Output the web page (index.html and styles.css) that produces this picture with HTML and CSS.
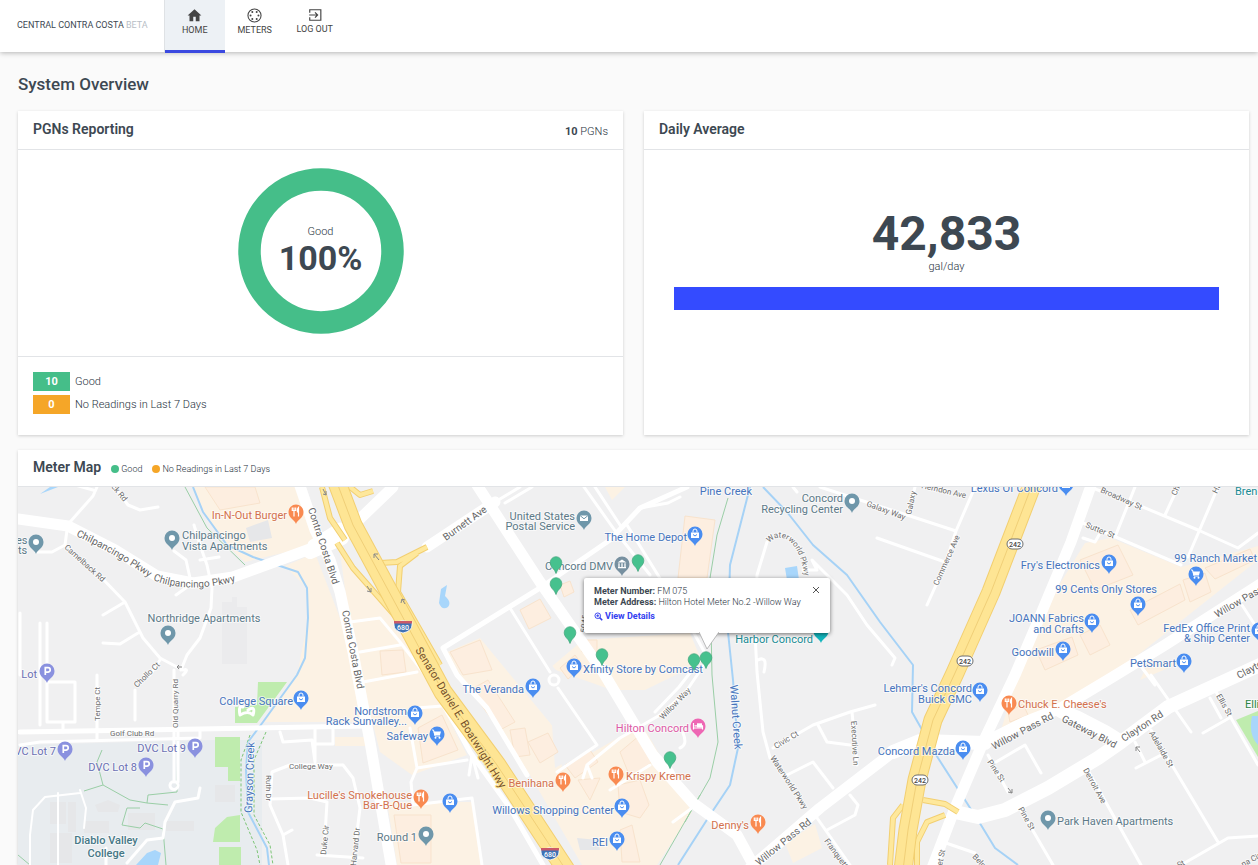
FILE: index.html
```html
<!DOCTYPE html>
<html lang="en">
<head>
<meta charset="utf-8">
<title>System Overview</title>
<link rel="stylesheet" href="styles.css">
</head>
<body>
<header class="topbar">
  <div class="brand">CENTRAL CONTRA COSTA <span class="beta">BETA</span></div>
  <nav class="nav">
    <a class="nav-item active" href="#home">
      <svg viewBox="0 0 24 24" class="nav-icon"><path fill="currentColor" d="M10 21v-7h4v7h6v-9h3L12 2 1 12h3v9z"/></svg>
      <span>HOME</span></a>
    <a class="nav-item" href="#meters">
      <svg viewBox="0 0 24 24" class="nav-icon"><circle cx="12" cy="12" r="10.500" fill="none" stroke="currentColor" stroke-width="1.700"/><g fill="currentColor"><circle cx="8.500" cy="6.500" r="1.600"/><circle cx="15.500" cy="6.500" r="1.600"/><circle cx="5.700" cy="12" r="1.600"/><circle cx="18.300" cy="12" r="1.600"/><circle cx="8.500" cy="17.500" r="1.600"/><circle cx="15.500" cy="17.500" r="1.600"/></g></svg>
      <span>METERS</span></a>
    <a class="nav-item logout" href="#logout">
      <svg viewBox="0 0 24 24" class="nav-icon"><path fill="none" stroke="currentColor" stroke-width="2" d="M3 8V3h19v18H3v-5M2 12h14M12 7.500l4.500 4.500-4.500 4.500"/></svg>
      <span>LOG OUT</span></a>
  </nav>
</header>
<main class="page">
  <h1>System Overview</h1>
  <div class="row">
    <section class="card">
      <div class="card-head"><h2>PGNs Reporting</h2><span class="count"><b>10</b> PGNs</span></div>
      <div class="donut-wrap">
        <div class="donut">
          <svg viewBox="0 0 166 166" class="ring"><circle cx="83" cy="83" r="71.500" fill="none" stroke="#45be89" stroke-width="22.500"/></svg>
          <div class="donut-label"><span>Good</span><strong>100%</strong></div>
        </div>
      </div>
      <ul class="legend">
        <li><span class="badge good">10</span>Good</li>
        <li><span class="badge warn">0</span>No Readings in Last 7 Days</li>
      </ul>
    </section>
    <section class="card">
      <div class="card-head"><h2>Daily Average</h2></div>
      <div class="average"><strong>42,833</strong><span>gal/day</span><div class="bar"></div></div>
    </section>
  </div>
  <section class="card map-card">
    <div class="card-head map-head"><h2>Meter Map</h2><span class="key"><i class="dot good"></i>Good</span><span class="key"><i class="dot warn"></i>No Readings in Last 7 Days</span></div>
    <div class="map">
      <svg class="map-svg" viewBox="18 487 1240 378" preserveAspectRatio="xMinYMin slice">
        <defs>
          <path id="drop" d="M0 12C-1.200 7.500-7.500 6.500-7.500 0A7.500 7.500 0 1 1 7.500 0C7.500 6.500 1.200 7.500 0 12Z"/>
          <g id="p-dot"><use href="#drop" fill="#6f97aa"/><circle r="3" fill="#fff"/></g>
          <g id="p-bag"><use href="#drop" fill="#4a8df0"/><path d="M-4-1.500H4V4H-4Z" fill="#fff"/><path d="M-2-1.500V-3a2 2 0 0 1 4 0v1.500" fill="none" stroke="#fff"/><path d="M-2 0.500Q0 3.500 2 0.500" fill="none" stroke="#4a8df0"/></g>
          <g id="p-cart"><use href="#drop" fill="#4a8df0"/><path d="M-3.500-2.500H4L3 1H-2.500Z" fill="#fff"/><path d="M-5-4h1.500L-2 2H3" fill="none" stroke="#fff"/><circle cx="-1.500" cy="3.700" r="1" fill="#fff"/><circle cx="2.500" cy="3.700" r="1" fill="#fff"/></g>
          <g id="p-food"><use href="#drop" fill="#f98a51"/><path d="M-2-4.500V4.500M-3.700-4.500v3h3.400v-3M2.500 4.500v-9Q1 -3 1.500 0h1" fill="none" stroke="#fff" stroke-width="1.200"/></g>
          <g id="p-park"><use href="#drop" fill="#8a91df"/><path d="M-1.700 4V-3.300H1a2.200 2.200 0 0 1 0 4.400H-1.700" fill="none" stroke="#fff" stroke-width="1.700"/></g>
          <g id="p-mail"><use href="#drop" fill="#6f97aa"/><path d="M-4-2.500H4V3H-4Z" fill="#fff"/><path d="M-4-2.500 0 .8 4-2.500" fill="none" stroke="#6f97aa"/></g>
          <g id="p-civic"><use href="#drop" fill="#7790a0"/><path d="M-4.500-1.500 0-4.500 4.500-1.500ZM-4 3H4V4.200H-4Z" fill="#fff"/><path d="M-3-.8V3M0-.8V3M3-.8V3" stroke="#fff" stroke-width="1.300"/></g>
          <g id="p-bed"><use href="#drop" fill="#ee67b4"/><path d="M-4.500-3V3.500M-4.500 2H4.500V3.500M4.500 2V-.2H-3.500" fill="none" stroke="#fff" stroke-width="1.200"/><path d="M-1-2.700H4V1.500H-1Z" fill="#fff"/></g>
          <g id="meter"><path d="M0 8.500C-1 6-1.500 5-3 3.500-5 1.500-5.800-.5-5.800-2.500A5.800 5.800 0 0 1 5.800-2.500C5.800-.5 5 1.500 3 3.500 1.500 5 1 6 0 8.500Z" fill="#46c18e" stroke="#3fa47a" stroke-width=".7"/></g>
          <g id="i680"><path d="M-9-4.500Q-5-3.500 0-5.500 5-3.500 9-4.500L9-1Q9 5 0 7-9 5-9-1Z" fill="#3f72b5" stroke="#fff" stroke-width=".8"/><path d="M-9-5H9V-2.500H-9Z" fill="#cc5a68"/><text y="4" class="shield white">680</text></g>
          <g id="s242"><rect x="-8" y="-5" width="16" height="10" rx="5" fill="#fff" stroke="#6e6e6e"/><text y="3" class="shield">242</text></g>
          <path id="c-chil" d="M76 536Q112 552 153 580"/>
          <path id="c-chil2" d="M153 580Q190 595 240 580"/>
          <path id="c-water" d="M769 543Q778 533 789 541 803 552 805 585"/>
          <path id="c-sen" d="M415 650 503 793"/>
          <path id="ramps" d="M322 487 330 518 345 540M337 543 353 568 397 618M362 540 367 552 380 563 397 562 427 547M417 553 400 566 398 592 413 618 440 665M350 487 360 495 373 491M903 805 893 818 890 865M923 800 945 804 958 812M917 865 917 842 927 822 945 815"/>
          <path id="freeways" d="M336 480 353 525 380 575 407 625 443 692 497 765 543 835 566 870M1034 480 991 592 955 673 933 720 917 780 908 830 903 870"/>
        </defs>

        <rect x="18" y="487" width="1240" height="378" fill="#f0f0f1"/>
        <g fill="#e8ecef"><path d="M18 745 215 740H262V865H18Z"/></g>
        <g fill="#fcf2e4">
          <path d="M193 487H298L316 545 245 562 227 545 207 518Z"/>
          <path d="M285 566 315 553 360 670 368 722H264L297 675 308 620 307 588Z"/>
          <path d="M340 552 390 613 425 672 467 755 412 775 380 752 352 640Z"/>
          <path d="M387 802H472L482 865H397ZM335 737H367V746H335Z"/>
          <path d="M445 653 480 638 560 735 562 770 642 724 692 812 657 865H582L530 775Z"/>
          <path d="M550 668 583 640 690 633 702 662 645 690 612 690ZM605 487H625L612 500ZM785 843 815 824 822 848 793 863Z"/>
          <path d="M1085 543 1111 538 1181 567 1251 548 1258 546V560L1138 655 1060 708 1001 730 1018 675 1045 608Z"/>
          <path d="M1140 680 1180 663 1150 660Z"/>
        </g>
        <g fill="#f0f0f1"><path d="M497 652 530 640 612 735 555 768 552 725Z"/></g>
        <g class="buildings">
          <path d="M685 516 715 520 707 578 678 578ZM520 610 540 599 551 618 529 629ZM450 652 480 640 492 670 463 675ZM380 651 403 650 406 672 382 675Z"/>
          <path d="M560 585 570 581 574 592 564 597ZM580 640h17v12h-15ZM560 668 575 655 583 666 568 679ZM528 742 548 733 558 752 540 763ZM565 765 590 750 598 762 575 778Z"/>
          <path d="M418 728 442 715 458 750 423 763ZM394 815h37v48h-30ZM620 752 640 735 655 760 630 777ZM618 785 640 780 649 805 640 818 620 812ZM470 690 488 680 515 722 500 730ZM510 730 525 728 530 755 515 757Z"/>
          <path d="M620 830 632 825 640 862 622 862ZM578 780 600 778 590 800ZM1080 560 1118 545 1133 575 1095 590ZM1130 610 1180 584 1185 600 1138 625ZM1183 580 1205 573 1211 592 1190 602ZM1080 635 1100 625 1110 645 1090 655ZM1036 650 1072 637 1078 655 1045 670ZM1205 568 1250 549 1255 560 1215 579ZM1008 712 1023 704 1028 715 1010 722ZM205 487 255 487 260 503 220 510Z"/>
        </g>
        <g fill="#e6e7e9">
          <path d="M246 528 268 520 272 538 250 542ZM50 802h16v22h-16ZM68 802h8v30h-8ZM95 805 108 800 120 805 118 812 98 812ZM128 813h27v17h-27ZM84 821h25v12h-25ZM215 785h20v17h-20ZM50 833h22v30h-22ZM166 821h28v10h-28ZM577 838 598 840 600 850 580 850Z"/>
        </g>
        <path d="M222 602h10v-5h5v10h10v57h-25Z" fill="#ebebed"/>
        <g fill="#bfecae"><path d="M258 682H287L257 723H235V707L257 705ZM215 737H240V781H228V767H215ZM240 815V842H213L215 828 227 817ZM219 847H241V865H219ZM1236 720 1258 711V757Z"/></g>
        <g fill="#a8d6fb"><path d="M136 865 147 853 155 850 161 853 158 865ZM785 568 797 566 799 580 787 580ZM441 589 447 585 445 596Q452 602 448 607 442 611 439 603ZM1252 716H1258V745Q1248 735 1252 716ZM40 494 50 487H58Z"/></g>

        <g class="creek">
          <path d="M193 487 203 512 227 545 253 557 277 565 298 572 307 588 308 618 305 658 297 675 263 722 248 742 246 770 248 812 267 848 269 865"/>
          <path d="M750 487 730 565 728 632 733 680 738 748 730 785 710 815 678 865"/>
          <path d="M763 487 787 512 813 545 847 575 880 622 913 665 912 712 938 758 965 800 981 825 995 848 1018 865"/>
        </g>
        <g class="trail">
          <path d="M185 487 207 528 245 565M728 498 717 535 710 578 712 675 718 742 710 778 687 818 660 865M700 795 685 822"/>
          <path d="M102 750 97 762 103 785 130 800 147 803 148 795 177 792 178 735M84 791 103 785M147 803 168 805M140 808 127 808 122 825 140 828 145 823 163 829 166 865M18 855 30 865"/>
          <path class="dash" d="M250 735 241 760 241 812 257 850 260 865M266 732 254 760 254 815 270 845 273 865"/>
        </g>

        <g class="minor">
          <path d="M70 522 93 496 97 487M75 485 93 490M67 530 65 545 52 552 36 552M115 487 128 505 140 510 158 507M100 576 125 602 143 638 160 658 177 667M125 602 103 615M138 633 120 644 103 643M194 525 200 545 207 565 212 588 211 608 200 638 187 655 181 670M174 551 186 560 190 578M200 560 219 557M190 585 176 595"/>
          <path d="M20 613V675M40 623V725M47 623V682M47 682H75V722H47ZM97 675V740M135 690V720M63 722V732M20 745 40 742 200 738V730M150 675 160 660M174 670V782M183 675Q190 668 183 670M172 782a4 4 0 1 0 4 0M178 728V782"/>
          <path d="M280 732 283 742 312 740 315 762M315 728V762M333 728V744H316M343 765H290L272 772 270 805 283 835 288 865M343 765 353 778 360 808 353 865M270 799 310 798 327 802 325 835 323 855M317 855 363 858M283 835 292 830M243 707Q238 705 240 715 248 710 253 715 256 705 248 710"/>
          <path class="thin" d="M30 865V835L33 810 45 797 80 793M80 790 86 808 84 828M58 793V865"/>
          <path d="M200 788 198 798 175 802 165 822 163 838 147 840 127 863M106 848V865"/>
          <path d="M350 622 380 618 400 642 423 672M360 652 400 645M363 682 417 672M417 708 442 706M410 728 417 768 467 760M417 768 411 782 413 805 472 798 482 865M472 755 469 775M472 755 478 778"/>
          <path d="M510 608 550 672M558 688 597 745 557 772M595 487 622 528M584 487 616 532 650 575M627 525 695 635 706 655M640 508 668 503 680 497M495 502 520 487M505 503 532 487M706 662 685 693 660 715 620 738 587 765 583 778M700 660 679 687 655 712M683 733Q688 745 680 748M640 735 672 770 692 808 673 822M610 790 650 765M587 765 592 778"/>
          <path d="M767 542 757 575 755 633 757 672 763 732 770 758M803 570H817L812 560 847 595 867 625 895 658 892 665M758 660Q768 655 764 672M793 487 797 492M820 487 860 500 907 515 956 531 975 487M956 531 945 565 927 605M877 538 945 562M907 515 915 487"/>
          <path d="M773 748 813 725 850 712 875 705M818 725 827 742 850 745M852 712 857 765M787 775 813 762 833 788M850 795 858 805 855 815 827 830M815 815 850 865"/>
          <path d="M1083 523 1111 535 1181 565M1090 487 1138 505 1198 530 1238 548 1258 533M1135 487 1115 537M1178 487 1165 515M1218 487 1188 557M1083 538 1095 542 1099 535M1242 605 1255 625M1140 665 1155 685"/>
          <path d="M1151 675 1191 732M988 755 1008 792M996 762 1025 745 1041 773M1018 805 1053 865M1085 765 1141 865M1151 730 1218 842M1135 742 1145 762M1136 768 1165 753M1215 690 1258 765M1210 698 1221 718M1203 733 1231 717M1181 865 1228 838 1258 836M946 843 975 853"/>
        </g>
        <g class="mid">
          <path d="M443 648 540 588 610 540 640 508 687 487M443 648 457 675 487 708 527 775M423 670 457 728 470 752 510 808 543 865"/>
          <path d="M20 732 200 729 367 726"/>
        </g>
        <g class="major">
          <path d="M298 480 315 530 330 560 340 592 353 652 370 742 392 870"/>
          <path d="M18 519 68 526 115 550 157 576 193 583 233 577 310 549 340 538 393 487M427 547 495 502M313 545 340 528"/>
          <path d="M477 485 540 582 603 672 657 762 693 803 737 835 755 868M750 868 820 808 893 752 920 741 985 742 1025 722 1061 708 1111 678 1165 645 1262 583"/>
          <path d="M1093 480 1071 542 1035 628 1015 675 985 738 955 808 932 868"/>
        </g>
        <g class="wide">
          <path d="M955 812 978 817 1005 810 1048 788 1098 758 1121 742 1168 707 1238 675 1262 664M1061 711 1078 718 1105 732 1121 742M310 552 342 538M893 752 920 741 985 743"/>
        </g>
        <use href="#ramps" class="ramp-edge"/>
        <use href="#ramps" class="ramp"/>
        <use href="#freeways" class="hwy-edge"/>
        <use href="#freeways" class="hwy"/>
        <use href="#freeways" class="hwy-line"/>
        <circle cx="554" cy="680" r="5" fill="#f0f0f1" stroke="#fff" stroke-width="3"/>
        <path class="arrow" d="M323 489 326 495M323 494 326 495 326 491M379 560 374 554M374 558V554H378M367 586 371 592M367 591 371 592 371 588M405 604 402 599M401 603 402 599 405 600M182 667H177M179 665 177 667 179 669M1008 788 1012 793M1008 792 1012 793 1012 789M1140 752 1136 747M1136 751V747H1140"/>

        <g class="road">
          <text><textPath href="#c-chil">Chilpancingo Pkwy</textPath></text>
          <text><textPath href="#c-chil2">Chilpancingo Pkwy</textPath></text>
          <text transform="translate(308 509) rotate(72)">Contra Costa Blvd</text>
          <text transform="translate(342 611) rotate(79)">Contra Costa Blvd</text>
          <text transform="translate(446 541) rotate(-36)">Burnett Ave</text>
          <text transform="translate(759 866) rotate(-39)">Willow Pass Rd</text>
          <text transform="translate(994 750) rotate(-28)">Willow Pass Rd</text>
          <text transform="translate(1217 618) rotate(-30)">Willow Pass Rd</text>
          <text transform="translate(1061 721) rotate(27)">Gateway Blvd</text>
          <text transform="translate(1124 742) rotate(-33)">Clayton Rd</text>
          <text transform="translate(1239 679) rotate(-28)">Clayton Rd</text>
        </g>
        <g class="brown"><text><textPath href="#c-sen">Senator Daniel E. Boatwright Hwy</textPath></text></g>
        <g class="street">
          <text transform="translate(64 548) rotate(42)">Camelback Rd</text>
          <text transform="translate(111 487) rotate(50)">ck Rd</text>
          <text transform="translate(137 688) rotate(-44)">Chollo Ct</text>
          <text transform="translate(100 721) rotate(-90)">Tempe Ct</text>
          <text transform="translate(178 728) rotate(-90)">Old Quarry Rd</text>
          <text x="110" y="736">Golf Club Rd</text>
          <text x="289" y="769">College Way</text>
          <text transform="translate(266 775) rotate(90)">Ruth Dr</text>
          <text transform="translate(326 855) rotate(-84)">Duke Cir</text>
          <text transform="translate(356 866) rotate(-84)">Harvard Dr</text>
          <text><textPath href="#c-water">Waterworld Pkwy</textPath></text>
          <text transform="translate(866 506) rotate(20)">Galaxy Way</text>
          <text transform="translate(911 515) rotate(-78)">Galaxy</text>
          <text transform="translate(921 488) rotate(13)">Herndon Ave</text>
          <text transform="translate(938 586) rotate(-66)">Commerce Ave</text>
          <text transform="translate(1100 492) rotate(24)">Broadway St</text>
          <text transform="translate(1085 527) rotate(22)">Sutter St</text>
          <text transform="translate(1176 496) rotate(-65)">Cha</text>
          <text transform="translate(1217 494) rotate(-65)">Har</text>
          <text transform="translate(663 720) rotate(-46)">Willow Way</text>
          <text transform="translate(776 749) rotate(-31)">Civic Ct</text>
          <text transform="translate(851 721) rotate(87)">Executive Ln</text>
          <text transform="translate(770 758) rotate(57)">Waterworld Pkwy</text>
          <text transform="translate(824 841) rotate(54)">Franquette</text>
          <text transform="translate(987 762) rotate(56)">Pine St</text>
          <text transform="translate(1018 809) rotate(60)">Pine St</text>
          <text transform="translate(1083 770) rotate(61)">Detroit Ave</text>
          <text transform="translate(1149 733) rotate(60)">Adelaide St</text>
          <text transform="translate(1216 696) rotate(60)">Ellis St</text>
          <text transform="translate(972 857) rotate(47)">Belmont</text>
          <text transform="translate(942 866) rotate(-78)">et St</text>
          <text transform="translate(1179 868) rotate(-30)">St</text>
          <text transform="translate(1243 867) rotate(-28)">na Cir</text>
          <text transform="translate(586 633) rotate(-84)">5045</text>
        </g>

        <g class="poi slate">
          <text x="16" y="544">es</text><text x="18" y="554">ts</text>
          <text x="182" y="539">Chilpancingo</text><text x="182" y="550">Vista Apartments</text>
          <text x="204" y="622" class="mid-a">Northridge Apartments</text>
          <text x="575" y="520" class="end">United States</text><text x="575" y="530" class="end">Postal Service</text>
          <text x="613" y="570" class="end">Concord DMV</text>
          <text x="843" y="502" class="end">Concord</text><text x="843" y="513" class="end">Recycling Center</text>
          <text x="417" y="841" class="end">Round 1</text>
          <text x="1057" y="825">Park Haven Apartments</text>
        </g>
        <g class="poi blue">
          <text x="687" y="541" class="end">The Home Depot</text>
          <text x="583" y="673">Xfinity Store by Comcast</text>
          <text x="524" y="693" class="end">The Veranda</text>
          <text x="293" y="705" class="end">College Square</text>
          <text x="407" y="715" class="end">Nordstrom</text><text x="407" y="725" class="end">Rack Sunvalley...</text>
          <text x="428" y="740" class="end">Safeway</text>
          <text x="614" y="814" class="end">Willows Shopping Center</text>
          <text x="608" y="846" class="end">REI</text>
          <text x="1058" y="492" class="end">Lexus Of Concord</text>
          <text x="1100" y="569" class="end">Fry's Electronics</text>
          <text x="1257" y="562" class="end">99 Ranch Market</text>
          <text x="1157" y="593" class="end">99 Cents Only Stores</text>
          <text x="1084" y="622" class="end">JOANN Fabrics</text><text x="1084" y="633" class="end">and Crafts</text>
          <text x="1054" y="656" class="end">Goodwill</text>
          <text x="1250" y="632" class="end">FedEx Office Print</text><text x="1250" y="642" class="end">&amp; Ship Center</text>
          <text x="1176" y="667" class="end">PetSmart</text>
          <text x="972" y="692" class="end">Lehmer's Concord</text><text x="972" y="703" class="end">Buick GMC</text>
          <text x="955" y="755" class="end">Concord Mazda</text>
          <text x="752" y="495" class="end">Pine Creek</text>
          <text transform="translate(730 685) rotate(86)">Walnut Creek</text>
          <text transform="translate(252 813) rotate(-88)">Grayson Creek</text>
        </g>
        <g class="poi orange">
          <text x="287" y="519" class="end">In-N-Out Burger</text>
          <text x="412" y="799" class="end">Lucille's Smokehouse</text><text x="412" y="809" class="end">Bar-B-Que</text>
          <text x="554" y="787" class="end">Benihana</text><text x="626" y="780">Krispy Kreme</text>
          <text x="749" y="829" class="end">Denny's</text><text x="1018" y="708">Chuck E. Cheese's</text>
        </g>
        <g class="poi purple"><text x="37" y="678" class="end">Lot</text><text x="56" y="755" class="end">DVC Lot 7</text><text x="137" y="771" class="end">DVC Lot 8</text><text x="186" y="752" class="end">DVC Lot 9</text></g>
        <g class="poi pink"><text x="689" y="732" class="end">Hilton Concord</text></g>
        <g class="poi teal"><text x="813" y="643" class="end">Harbor Concord</text><text x="1235" y="495">Brenden</text></g>
        <g class="poi green"><text x="1245" y="708">Ellis</text></g>
        <g class="poi college"><text x="106" y="844" class="mid-a">Diablo Valley</text><text x="106" y="857" class="mid-a">College</text></g>

        <use href="#p-dot" x="36" y="542"/><use href="#p-dot" x="172" y="538"/><use href="#p-dot" x="168" y="633"/><use href="#p-dot" x="852" y="501"/><use href="#p-dot" x="426" y="834"/><use href="#p-dot" x="1048" y="818"/>
        <use href="#p-mail" x="584" y="518"/><use href="#p-civic" x="622" y="564"/>
        <use href="#p-bag" x="695" y="534"/><use href="#p-bag" x="574" y="666"/><use href="#p-bag" x="533" y="686"/><use href="#p-bag" x="301" y="698"/><use href="#p-bag" x="415" y="713"/><use href="#p-cart" x="437" y="734"/><use href="#p-bag" x="450" y="801"/><use href="#p-bag" x="622" y="806"/><use href="#p-bag" x="617" y="839"/>
        <use href="#p-bag" x="1066" y="484"/><use href="#p-bag" x="1109" y="562"/><use href="#p-cart" x="1196" y="574"/><use href="#p-bag" x="1138" y="604"/><use href="#p-bag" x="1092" y="621"/><use href="#p-bag" x="1063" y="649"/><use href="#p-bag" x="1259" y="630"/><use href="#p-bag" x="1184" y="661"/><use href="#p-bag" x="980" y="690"/><use href="#p-bag" x="963" y="748"/>
        <use href="#p-food" x="296" y="512"/><use href="#p-food" x="421" y="797"/><use href="#p-food" x="563" y="780"/><use href="#p-food" x="616" y="774"/><use href="#p-food" x="758" y="822"/><use href="#p-food" x="1009" y="703"/>
        <use href="#p-park" x="47" y="671"/><use href="#p-park" x="65" y="749"/><use href="#p-park" x="146" y="765"/><use href="#p-park" x="195" y="746"/>
        <use href="#p-bed" x="698" y="726"/><use href="#drop" x="821" y="631" fill="#12b5bd"/>
        <use href="#i680" x="403" y="626"/><use href="#i680" x="550" y="853"/>
        <use href="#s242" x="1015" y="544"/><use href="#s242" x="965" y="661"/><use href="#s242" x="920" y="780"/>
        <use href="#meter" x="556" y="565"/><use href="#meter" x="556" y="586"/><use href="#meter" x="638" y="563"/><use href="#meter" x="570" y="635"/><use href="#meter" x="602" y="657"/><use href="#meter" x="694" y="662"/><use href="#meter" x="706" y="660"/><use href="#meter" x="670" y="760"/>
      </svg>
      <div class="popup">
        <button class="close" type="button" aria-label="Close"><svg viewBox="0 0 8 8"><path d="M1 1 7 7M7 1 1 7" stroke="#555" fill="none"/></svg></button>
        <div><b>Meter Number:</b> FM 075</div>
        <div><b>Meter Address:</b> Hilton Hotel Meter No.2 -Willow Way</div>
        <a href="#details"><svg viewBox="0 0 24 24" class="mag"><path d="M15 15 22 22" stroke="currentColor" stroke-width="4"/><circle cx="10" cy="10" r="7.500" fill="none" stroke="currentColor" stroke-width="2.500"/><path d="M10 6v8M6 10h8" stroke="currentColor" stroke-width="2.500"/></svg>View Details</a>
        <svg class="tail" viewBox="0 0 20 17"><path d="M0 0 8 17 20 0" fill="#fff" stroke="#aaa" stroke-width=".8"/></svg>
      </div>
    </div>
  </section>
</main>
</body>
</html>
```
FILE: styles.css
```css
* { box-sizing: border-box; }
body {
  margin: 0;
  min-height: 100vh;
  display: flex;
  flex-direction: column;
  overflow: hidden;
  background: #fafafa;
  color: #26313c;
  font: 300 11px/14px Roboto, "Liberation Sans", sans-serif;
}
b, strong, h1, h2 { color: #3d4852; }
b, strong { font-weight: 700; }
.topbar {
  display: flex;
  height: 52px;
  background: #fff;
  box-shadow: 0 1px 5px rgba(0, 0, 0, .28);
  position: relative;
}
.brand {
  padding: 18px 16px 0 17px;
  border-right: 1px solid #dfe2e5;
  color: #3d4852;
  font-size: 9px;
  font-weight: 400;
}
.beta { color: #b8bec6; }
.nav { display: flex; }
.nav-item {
  width: 60px;
  height: 53px;
  padding-top: 8px;
  display: flex;
  flex-direction: column;
  align-items: center;
  color: #444;
  font-size: 9px;
  line-height: 15px;
  font-weight: 400;
  text-decoration: none;
}
.nav-item.active { background: #edf1f5; border-bottom: 3px solid #3b49e0; }
.nav-icon { width: 15px; height: 15px; }
.logout .nav-icon { width: 14px; height: 14px; }
.page {
  flex: 1;
  display: flex;
  flex-direction: column;
  padding-left: 18px;
}
h1 {
  margin: 22px 0 17px;
  font-size: 17px;
  line-height: 20px;
  font-weight: 500;
}
.row {
  display: grid;
  grid-template-columns: 1fr 1fr;
  gap: 21px;
  padding-right: 9px;
  margin-bottom: 15px;
}
.card {
  background: #fff;
  box-shadow: 0 1px 3px rgba(0, 0, 0, .18);
}
.card-head {
  height: 39px;
  padding: 0 15px;
  display: flex;
  align-items: center;
  justify-content: space-between;
  border-bottom: 1px solid #e2e4e7;
}
.count { padding-top: 3px; }
h2 { margin: 0 0 2px; font-size: 14px; line-height: 18px; font-weight: 600; }
.donut-wrap { display: flex; justify-content: center; padding: 18px 0 22px; }
.donut { width: 166px; height: 166px; display: grid; }
.ring, .donut-label { grid-area: 1 / 1; }
.donut-label {
  display: flex;
  flex-direction: column;
  align-items: center;
  justify-content: center;
}
.donut-label strong { font-size: 34px; line-height: 38px; }
.legend {
  margin: 0;
  padding: 15px 15px 21px;
  list-style: none;
  border-top: 1px solid #e2e4e7;
  display: grid;
  gap: 4px;
}
.legend li { display: flex; align-items: center; gap: 5px; }
.badge {
  width: 37px;
  color: #fff;
  font-weight: 700;
  line-height: 19px;
  text-align: center;
}
.good { background: #45be89; }
.warn { background: #f5a628; }
.average {
  padding: 56px 30px 0;
  display: flex;
  flex-direction: column;
  align-items: center;
}
.average strong { font-size: 48px; line-height: 56px; }
.average span { line-height: 10px; }
.bar { width: 100%; height: 23px; margin-top: 15px; background: #344bff; }
.map-card { flex: 1; display: flex; flex-direction: column; }
.map-head { height: 37px; justify-content: flex-start; }
.key { display: flex; align-items: center; margin-left: 10px; padding-top: 1px; font-size: 9px; }
.dot { width: 8px; height: 8px; border-radius: 50%; margin-right: 2px; }
.map { flex: 1; position: relative; min-height: 378px; overflow: hidden; }
.map-svg { position: absolute; width: 100%; height: 100%; }
.map-svg text { paint-order: stroke; stroke: rgba(255, 255, 255, .6); stroke-width: 2px; stroke-linejoin: round; }
.creek { fill: none; stroke: #a6d2f6; stroke-width: 2; stroke-linejoin: round; }
.trail { fill: none; stroke: #9acea6; stroke-width: 1; }
.dash { stroke: #7cc576; stroke-dasharray: 3 2; }
.minor, .mid, .major, .wide { fill: none; stroke: #fff; stroke-linejoin: round; stroke-linecap: round; }
.minor { stroke-width: 3; }
.thin { stroke-width: 2; }
.mid { stroke-width: 5; }
.major { stroke-width: 11; }
.wide { stroke-width: 14; }
.ramp-edge, .ramp, .hwy, .hwy-edge, .hwy-line { fill: none; stroke-linejoin: round; }
.ramp-edge { stroke: #f2cf71; stroke-width: 6; }
.ramp { stroke: #fee89c; stroke-width: 4; }
.hwy-edge { stroke: #f2cf71; stroke-width: 19; }
.hwy { stroke: #fee594; stroke-width: 17; }
.hwy-line { stroke: #f0cf78; stroke-width: 1; }
.buildings { fill: #fdeee0; stroke: #f8e3cd; stroke-width: 1; }
.arrow { fill: none; stroke: #888; stroke-width: 1; }
.road { font-size: 10px; font-weight: 400; fill: #666; }
.street { font-size: 8px; font-weight: 400; fill: #6d6d6d; }
.brown { font-size: 11px; font-weight: 400; fill: #74502a; }
.map-svg .brown text { stroke: #fee594; }
.poi { font-size: 11px; font-weight: 400; }
.end { text-anchor: end; }
.mid-a { text-anchor: middle; }
.slate { fill: #5d7a88; }
.blue { fill: #4775bd; }
.orange { fill: #d3714d; }
.purple { fill: #6b70b4; }
.pink { fill: #dd5ba6; }
.teal { fill: #188b94; }
.green { fill: #2c8544; }
.college { fill: #467786; font-weight: 500; }
.map-svg .shield { font-size: 7px; font-weight: 500; fill: #444; stroke: none; text-anchor: middle; }
.map-svg .shield.white { fill: #fff; }
.popup {
  position: absolute;
  left: 566px;
  top: 91px;
  width: 246px;
  height: 55px;
  padding: 8px 10px;
  background: #fff;
  border-radius: 2px;
  box-shadow: 0 1px 4px rgba(0, 0, 0, .55);
  font-size: 9px;
  line-height: 11px;
}
.popup a {
  display: flex;
  align-items: center;
  gap: 2px;
  margin-top: 3px;
  color: #3440f0;
  font-weight: 700;
  text-decoration: none;
}
.mag { width: 9px; height: 9px; }
.close {
  position: absolute;
  right: 10px;
  top: 8px;
  width: 8px;
  height: 8px;
  padding: 0;
  border: 0;
  background: none;
  display: flex;
}
.tail { position: absolute; left: 115px; top: 54px; width: 20px; height: 17px; }
```
